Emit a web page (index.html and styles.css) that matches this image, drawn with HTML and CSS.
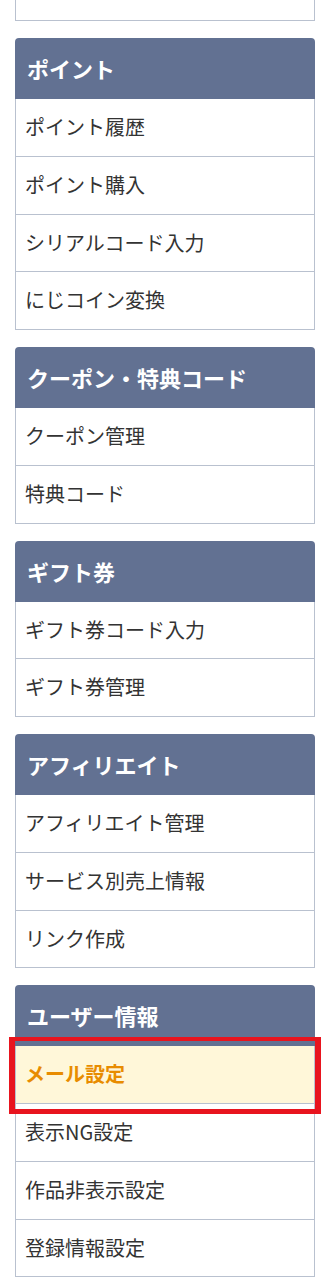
FILE: index.html
```html
<!DOCTYPE html>
<html lang="ja">
<head>
    <meta charset="UTF-8">
    <meta name="viewport" content="width=device-width, initial-scale=1.0">
    <title>マイページ メニュー</title>
    <link rel="stylesheet" href="styles.css">
</head>
<body>
    <div class="side-menu">
        <div class="menu-box menu-box-tail"></div>

        <div class="menu-box">
            <h2 class="menu-title">ポイント</h2>
            <ul class="menu-list">
                <li class="menu-item"><a href="#">ポイント履歴</a></li>
                <li class="menu-item"><a href="#">ポイント購入</a></li>
                <li class="menu-item"><a href="#">シリアルコード入力</a></li>
                <li class="menu-item"><a href="#">にじコイン変換</a></li>
            </ul>
        </div>

        <div class="menu-box">
            <h2 class="menu-title">クーポン・特典コード</h2>
            <ul class="menu-list">
                <li class="menu-item"><a href="#">クーポン管理</a></li>
                <li class="menu-item"><a href="#">特典コード</a></li>
            </ul>
        </div>

        <div class="menu-box">
            <h2 class="menu-title">ギフト券</h2>
            <ul class="menu-list">
                <li class="menu-item"><a href="#">ギフト券コード入力</a></li>
                <li class="menu-item"><a href="#">ギフト券管理</a></li>
            </ul>
        </div>

        <div class="menu-box">
            <h2 class="menu-title">アフィリエイト</h2>
            <ul class="menu-list">
                <li class="menu-item"><a href="#">アフィリエイト管理</a></li>
                <li class="menu-item"><a href="#">サービス別売上情報</a></li>
                <li class="menu-item"><a href="#">リンク作成</a></li>
            </ul>
        </div>

        <div class="menu-box">
            <h2 class="menu-title">ユーザー情報</h2>
            <ul class="menu-list">
                <li class="menu-item menu-item-current"><a href="#">メール設定</a></li>
                <li class="menu-item"><a href="#">表示NG設定</a></li>
                <li class="menu-item"><a href="#">作品非表示設定</a></li>
                <li class="menu-item"><a href="#">登録情報設定</a></li>
            </ul>
        </div>
    </div>
</body>
</html>
```

FILE: styles.css
```css
:root {
    --header-color: #627192;
    --line-color: #b9c1cf;
    --text-color: #333333;
    --current-bg: #fff7d9;
    --current-text: #e88c00;
    --mark-color: #e8141e;
}

* {
    margin: 0;
    padding: 0;
    box-sizing: border-box;
}

body {
    font-family: "Noto Sans CJK JP", "Noto Sans", sans-serif;
    background: #ffffff;
    color: var(--text-color);
}

.side-menu {
    padding: 0 15px;
}

.menu-box {
    margin-bottom: 17px;
}

.menu-box-tail {
    height: 21px;
    border: 1px solid var(--line-color);
    border-top: none;
}

.menu-title {
    background: var(--header-color);
    color: #ffffff;
    font-size: 22px;
    font-weight: bold;
    line-height: 31px;
    padding: 15px 12px;
    border-radius: 4px 4px 0 0;
}

.menu-list {
    list-style: none;
    border-left: 1px solid var(--line-color);
    border-right: 1px solid var(--line-color);
}

.menu-item {
    position: relative;
    border-bottom: 1px solid var(--line-color);
}

.menu-item a {
    display: block;
    padding: 15px 9px;
    font-size: 20px;
    line-height: 26.75px;
    color: var(--text-color);
    text-decoration: none;
}

/* current page */
.menu-item-current {
    background: var(--current-bg);
}

.menu-item-current a {
    color: var(--current-text);
    font-weight: bold;
}

.menu-item-current::after {
    content: "";
    position: absolute;
    top: -9px;
    bottom: -11px;
    left: -7px;
    right: -7px;
    border: solid var(--mark-color);
    border-width: 4px 6px 5px;
    pointer-events: none;
}
```
